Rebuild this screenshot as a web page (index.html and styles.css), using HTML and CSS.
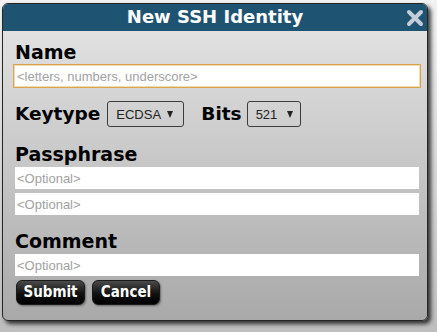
FILE: index.html
```html
<!DOCTYPE html>
<html lang="en">
<head>
    <meta charset="UTF-8">
    <title>New SSH Identity</title>
    <link rel="stylesheet" href="styles.css">
</head>
<body>
    <div class="dialog">
        <div class="dialog-title">
            New SSH Identity
            <svg class="close-btn" width="18" height="18" viewBox="0 0 18 18">
                <path d="M3 3 L15 15 M15 3 L3 15" stroke="#c3ced8" stroke-width="4" stroke-linecap="round"/>
            </svg>
        </div>
        <div class="dialog-body">
            <label class="field-label">Name</label>
            <input class="text-input focused" type="text" placeholder="<letters, numbers, underscore>">

            <div class="key-row">
                <span class="field-label">Keytype</span>
                <div class="select select-type">
                    <span>ECDSA</span>
                    <svg width="6" height="7" viewBox="0 0 6 7"><polygon points="0,0 6,0 3,7" fill="#222"/></svg>
                </div>
                <span class="field-label bits-label">Bits</span>
                <div class="select select-bits">
                    <span>521</span>
                    <svg width="6" height="7" viewBox="0 0 6 7"><polygon points="0,0 6,0 3,7" fill="#222"/></svg>
                </div>
            </div>

            <label class="field-label pass-label">Passphrase</label>
            <input class="text-input" type="password" placeholder="<Optional>">
            <input class="text-input second" type="password" placeholder="<Optional>">

            <label class="field-label comment-label">Comment</label>
            <input class="text-input" type="text" placeholder="<Optional>">

            <div class="buttons">
                <button class="btn btn-submit">Submit</button>
                <button class="btn btn-cancel">Cancel</button>
            </div>
        </div>
    </div>
</body>
</html>
```

FILE: styles.css
```css
* {
    margin: 0;
    padding: 0;
    box-sizing: border-box;
}

body {
    width: 437px;
    height: 332px;
    overflow: hidden;
    background: linear-gradient(#f2f2f2, #bebebe);
    font-family: "DejaVu Sans", sans-serif;
}

.dialog {
    width: 426px;
    height: 318px;
    margin: 3px 0 0 2px;
    border: 1px solid #262626;
    border-radius: 6px;
    overflow: hidden;
    background: linear-gradient(#e6e6e6, #a9a9a9);
    box-shadow: 3px 3px 4px rgba(0,0,0,0.75);
}

.dialog-title {
    position: relative;
    height: 27px;
    padding-bottom: 2px;
    background: #1f5372;
    color: #fff;
    text-align: center;
    font-weight: bold;
    font-size: 18px;
    line-height: 25px;
}

.close-btn {
    position: absolute;
    top: 5px;
    right: 3px;
}

.dialog-body {
    padding: 10px 8px 0 12px;
}

.field-label {
    display: block;
    font-weight: bold;
    font-size: 19px;
    line-height: 22px;
    color: #000;
    margin-bottom: 1px;
}

.text-input {
    display: block;
    width: 404px;
    height: 22px;
    border: none;
    background: #fff;
    padding: 0 2px;
    font-family: "Liberation Sans", Arial, sans-serif;
    font-size: 13px;
    outline: none;
}

.text-input::placeholder {
    color: #a2a2a2;
}

.text-input.focused {
    width: 408px;
    height: 24px;
    margin-left: -2px;
    padding: 0 3px;
    border: 1px solid #d6a64f;
    box-shadow: inset 0 0 0 1px #f2dcae;
}

.text-input.second {
    margin-top: 4px;
}

.key-row {
    display: flex;
    align-items: center;
    height: 26px;
    margin-top: 13px;
}

.key-row .field-label {
    margin-bottom: 0;
    font-size: 18.5px;
}

.select {
    display: flex;
    align-items: center;
    justify-content: space-between;
    height: 26px;
    border: 1px solid #3c3c3c;
    border-radius: 3px;
    font-family: "Liberation Sans", Arial, sans-serif;
    font-size: 13px;
    color: #222;
}

.select-type {
    width: 77px;
    margin-left: 7px;
    padding: 0 10px 0 8px;
}

.bits-label {
    margin-left: 17px;
}

.select-bits {
    width: 54px;
    margin-left: 5px;
    padding: 0 7px 0 8px;
}

.pass-label {
    margin-top: 16px;
    margin-bottom: 2px;
}

.comment-label {
    margin-top: 15px;
    margin-bottom: 2px;
}

.buttons {
    display: flex;
    gap: 7px;
    margin-top: 4px;
    margin-left: 1px;
}

.btn {
    height: 25px;
    border: 1px solid #1a1a1a;
    border-radius: 6px;
    background: linear-gradient(#4a4a4a, #111 55%, #000);
    color: #fff;
    font-family: "DejaVu Sans", sans-serif;
    font-stretch: condensed;
    font-weight: bold;
    font-size: 15px;
    line-height: 23px;
    box-shadow: 1px 1px 2px rgba(0,0,0,0.4);
    cursor: pointer;
}

.btn-submit {
    width: 69px;
}

.btn-cancel {
    width: 68px;
}
```
